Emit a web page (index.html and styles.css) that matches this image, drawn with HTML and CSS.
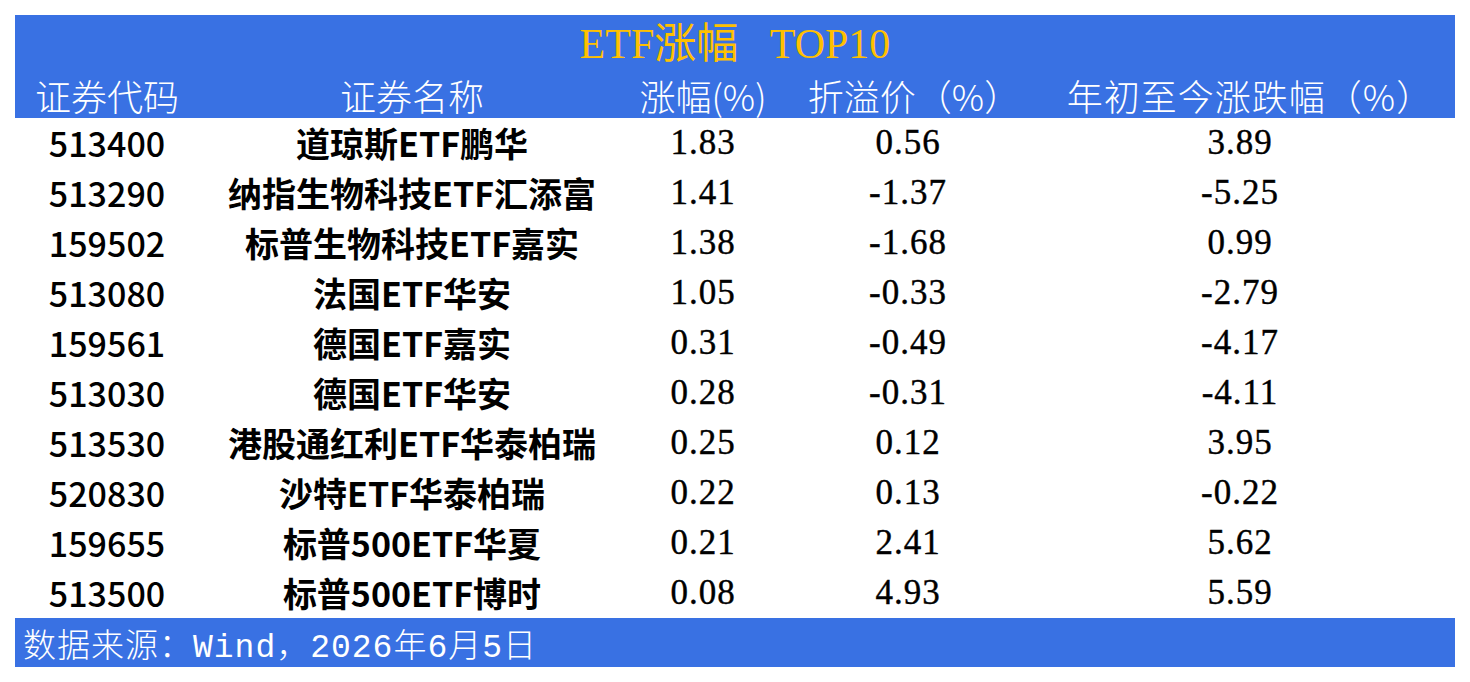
FILE: index.html
```html
<!DOCTYPE html>
<html lang="zh-CN">
<head>
<meta charset="utf-8">
<title>ETF涨幅 TOP10</title>
<link rel="stylesheet" href="styles.css">
</head>
<body>
<div class="sheet">
  <div class="head">
    <div class="title">ETF涨幅&nbsp;&nbsp;&nbsp;TOP10</div>
    <div class="cols head-cols">
      <div>证券代码</div>
      <div>证券名称</div>
      <div>涨幅(%)</div>
      <div class="h4">折溢价（%）</div>
      <div class="h5">年初至今涨跌幅（%）</div>
    </div>
  </div>
  <div class="rows">
    <div class="cols row"><div class="code">513400</div><div class="name">道琼斯ETF鹏华</div><div class="num">1.83</div><div class="num">0.56</div><div class="num last">3.89</div></div>
    <div class="cols row"><div class="code">513290</div><div class="name">纳指生物科技ETF汇添富</div><div class="num">1.41</div><div class="num">-1.37</div><div class="num last">-5.25</div></div>
    <div class="cols row"><div class="code">159502</div><div class="name">标普生物科技ETF嘉实</div><div class="num">1.38</div><div class="num">-1.68</div><div class="num last">0.99</div></div>
    <div class="cols row"><div class="code">513080</div><div class="name">法国ETF华安</div><div class="num">1.05</div><div class="num">-0.33</div><div class="num last">-2.79</div></div>
    <div class="cols row"><div class="code">159561</div><div class="name">德国ETF嘉实</div><div class="num">0.31</div><div class="num">-0.49</div><div class="num last">-4.17</div></div>
    <div class="cols row"><div class="code">513030</div><div class="name">德国ETF华安</div><div class="num">0.28</div><div class="num">-0.31</div><div class="num last">-4.11</div></div>
    <div class="cols row"><div class="code">513530</div><div class="name">港股通红利ETF华泰柏瑞</div><div class="num">0.25</div><div class="num">0.12</div><div class="num last">3.95</div></div>
    <div class="cols row"><div class="code">520830</div><div class="name">沙特ETF华泰柏瑞</div><div class="num">0.22</div><div class="num">0.13</div><div class="num last">-0.22</div></div>
    <div class="cols row"><div class="code">159655</div><div class="name">标普500ETF华夏</div><div class="num">0.21</div><div class="num">2.41</div><div class="num last">5.62</div></div>
    <div class="cols row"><div class="code">513500</div><div class="name">标普500ETF博时</div><div class="num">0.08</div><div class="num">4.93</div><div class="num last">5.59</div></div>
  </div>
  <div class="foot">数据来源：Wind，2026年6月5日</div>
</div>
</body>
</html>
```

FILE: styles.css
```css
html, body {
  margin: 0;
  padding: 0;
  background: #ffffff;
}

.sheet {
  width: 1440px;
  padding: 15px 15px 0 15px;
  font-family: "Noto Sans CJK SC", sans-serif;
}

.head {
  background: #3971e3;
  height: 103px;
  display: flex;
  flex-direction: column;
}

.title {
  height: 58px;
  line-height: 58px;
  text-align: center;
  color: #ffc000;
  font-family: "Liberation Serif", "Noto Sans CJK SC", serif;
  font-size: 42px;
  white-space: nowrap;
}

.cols {
  display: grid;
  grid-template-columns: 184px 426px 156px 254px 1fr;
  align-items: center;
}

.cols > div {
  text-align: center;
  white-space: nowrap;
}

.cols > .last {
  padding-right: 10px;
}

.head-cols {
  height: 45px;
  line-height: 45px;
  color: #ffffff;
  font-size: 36px;
  font-weight: 300;
}

.head-cols > .h4 {
  padding-left: 12px;
}

.head-cols > .h5 {
  padding-left: 10px;
  letter-spacing: 1px;
}

.row {
  height: 50px;
  line-height: 48px;
  color: #000000;
}

.code {
  font-size: 34px;
  font-weight: 500;
}

.name {
  font-size: 34px;
  font-weight: 700;
}

.num {
  font-family: "Liberation Serif", serif;
  font-size: 35px;
  letter-spacing: 1px;
  -webkit-text-stroke: 0.4px #000000;
}

.foot {
  box-sizing: border-box;
  background: #3971e3;
  height: 49px;
  padding: 12px 0 0 8px;
  line-height: 37px;
  color: #ffffff;
  font-family: "Liberation Mono", "Noto Sans CJK SC", monospace;
  font-size: 33px;
  font-weight: 300;
  letter-spacing: 1px;
  white-space: nowrap;
}
```
